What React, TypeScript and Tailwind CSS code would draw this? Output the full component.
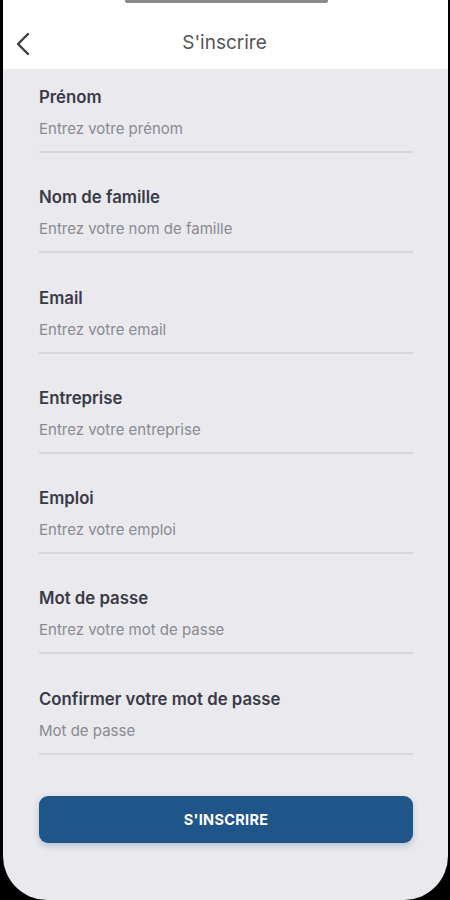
import React from "react";

const fields = [
  { label: "Prénom", placeholder: "Entrez votre prénom" },
  { label: "Nom de famille", placeholder: "Entrez votre nom de famille" },
  { label: "Email", placeholder: "Entrez votre email" },
  { label: "Entreprise", placeholder: "Entrez votre entreprise" },
  { label: "Emploi", placeholder: "Entrez votre emploi" },
  { label: "Mot de passe", placeholder: "Entrez votre mot de passe" },
  { label: "Confirmer votre mot de passe", placeholder: "Mot de passe" },
];

export default function App() {
  return (
    <div
      className="relative w-[450px] h-[900px] bg-black overflow-hidden"
      style={{ fontFamily: "Inter, 'Open Sans', sans-serif" }}
    >
      <div className="ml-[3px] mr-[2px] h-[900px] bg-[#e9e9ee] rounded-b-[44px] overflow-hidden flex flex-col">
        <div className="h-[69px] bg-white relative shrink-0">
          <div className="absolute left-[12px] top-[32px]">
            <svg width="18" height="24" viewBox="0 0 18 24" fill="none">
              <path d="M13 2 L3 12 L13 22" stroke="#3c3c43" strokeWidth="2.4" strokeLinecap="round" strokeLinejoin="round" />
            </svg>
          </div>
          <div className="w-full text-center text-[19px] leading-[24px] text-[#555558] pt-[31px] pr-[2px]">S'inscrire</div>
        </div>
        <div className="pl-[36px] pr-[35px] pt-[17px] flex flex-col">
          {fields.map((f, i) => (
            <div key={i} className="flex flex-col mb-[33.3px]">
              <div className="text-[16.8px] leading-[22px] font-semibold text-[#3a3a46]">{f.label}</div>
              <div className="mt-[11px] text-[15px] leading-[20px] text-[#8a8a90]">{f.placeholder}</div>
              <div className="mt-[12px] h-[2px] bg-[#d6d6db]" />
            </div>
          ))}
          <div className="mt-[8px] h-[47px] rounded-[9px] bg-[#1f5589] shadow-[0_3px_6px_rgba(31,85,137,0.25)] flex items-center justify-center text-white text-[14.5px] font-bold tracking-[0.3px]">
            S'INSCRIRE
          </div>
        </div>
      </div>
      <div className="absolute left-[125px] top-0 w-[203px] h-[3px] bg-[#8a8a8a] rounded-b-[2px]" />
    </div>
  );
}
